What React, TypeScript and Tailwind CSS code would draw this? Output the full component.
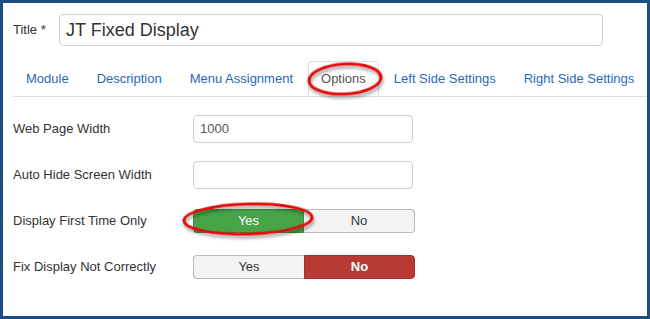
import React from "react";

const tabs = ["Module", "Description", "Menu Assignment", "Options", "Left Side Settings", "Right Side Settings"];

function Toggle({ yes }: { yes: boolean }) {
  return (
    <div className="flex w-[222px] h-[24px] text-[13px]">
      <div
        className={
          yes
            ? "w-[111px] flex items-center justify-center bg-[#46a346] text-white border border-[#3c8f3c] rounded-l-[4px]"
            : "w-[111px] flex items-center justify-center bg-[#f3f3f3] text-[#333] border border-[#b8b8b8] border-r-0 rounded-l-[4px]"
        }
      >
        Yes
      </div>
      <div
        className={
          yes
            ? "w-[111px] flex items-center justify-center bg-[#f3f3f3] text-[#333] border border-[#b8b8b8] border-l-0 rounded-r-[4px]"
            : "w-[111px] flex items-center justify-center bg-[#b73a34] text-white font-bold border border-[#a3302b] rounded-r-[4px]"
        }
      >
        No
      </div>
    </div>
  );
}

export default function App() {
  return (
    <div
      className="relative w-[650px] h-[319px] bg-white border-[3px] border-[#1f4d80] text-[#333] overflow-hidden"
      style={{ fontFamily: '"Liberation Sans", Arial, sans-serif' }}
    >
      <div className="pl-[10px] pt-[11px]">
        <div className="flex items-center h-[32px]">
          <div className="w-[46px] text-[13px] text-[#333]">Title *</div>
          <div className="w-[544px] h-[32px] border border-[#ccc] rounded-[4px] px-[6px] flex items-center text-[18px] text-[#333]">
            JT Fixed Display
          </div>
        </div>

        <div className="mt-[15px] flex border-b border-[#ddd]">
          {tabs.map((t) => (
            <div
              key={t}
              className={
                t === "Options"
                  ? "h-[35px] px-3 mr-[2px] shrink-0 whitespace-nowrap flex items-center text-[13px] text-[#555] bg-white border border-[#ddd] border-b-white -mb-px rounded-t-[4px]"
                  : "h-[35px] px-3 mr-[2px] shrink-0 whitespace-nowrap flex items-center text-[13px] text-[#2a69b8] border border-transparent"
              }
            >
              {t}
            </div>
          ))}
        </div>

        <div className="mt-[9px]">
          <div className="h-[46px] flex items-center">
            <div className="w-[180px] text-[13px]">Web Page Width</div>
            <div className="w-[220px] h-[28px] border border-[#ccc] rounded-[4px] px-[6px] flex items-center text-[13px] text-[#555]">
              1000
            </div>
          </div>
          <div className="h-[46px] flex items-center">
            <div className="w-[180px] text-[13px]">Auto Hide Screen Width</div>
            <div className="w-[220px] h-[28px] border border-[#ccc] rounded-[4px]" />
          </div>
          <div className="h-[46px] flex items-center">
            <div className="w-[180px] text-[13px]">Display First Time Only</div>
            <Toggle yes={true} />
          </div>
          <div className="h-[46px] flex items-center">
            <div className="w-[180px] text-[13px]">Fix Display Not Correctly</div>
            <Toggle yes={false} />
          </div>
        </div>
      </div>

      <svg className="absolute left-[-3px] top-[-3px] pointer-events-none" width="650" height="319">
        <defs>
          <filter id="sh" x="-20%" y="-40%" width="140%" height="200%">
            <feDropShadow dx="1" dy="3" stdDeviation="1.6" floodColor="#000" floodOpacity="0.35" />
          </filter>
        </defs>
        <ellipse cx="345" cy="79" rx="36" ry="15" fill="none" stroke="#e01010" strokeWidth="3" transform="rotate(-3 345 79)" filter="url(#sh)" />
        <ellipse cx="248" cy="219" rx="64" ry="15" fill="none" stroke="#e01010" strokeWidth="3" transform="rotate(-1.5 248 219)" filter="url(#sh)" />
      </svg>
    </div>
  );
}
